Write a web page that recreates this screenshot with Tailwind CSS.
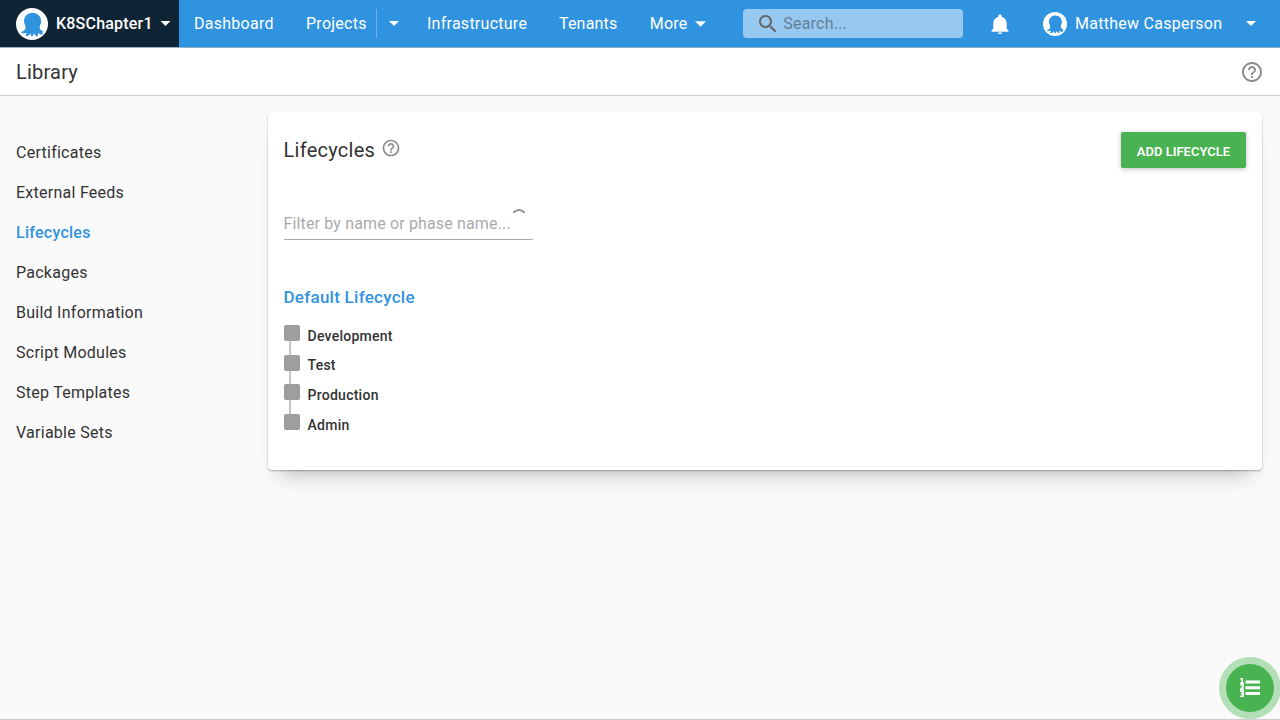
<!DOCTYPE html>
<html lang="en">
<head>
<meta charset="utf-8">
<title>Library - Lifecycles</title>
<script src="https://cdn.jsdelivr.net/npm/@tailwindcss/browser@4"></script>
</head>
<body class="h-[720px] overflow-hidden bg-[#fafafa] font-['Roboto',sans-serif] tracking-[0.26px] text-[#333333]">
<svg class="hidden">
  <symbol id="octo" viewBox="0 0 32 32"><circle cx="16" cy="16" r="16" fill="#fff"/><path fill="#2f93e0" d="M16.500 4.800C11.600 4.800 8 8.400 8 13.200C8 15.800 9.600 17.500 9.600 19.500C9.600 21.800 7.800 23.200 5 24.200C6.200 25.700 8.500 25.600 10.600 24.700C10.500 26 9.800 26.800 9.600 27.900C11.800 28.500 13.400 27.200 14.400 25.200C14.900 26.300 14.800 27.700 15.800 28.400C17.200 28.200 17.600 26.600 18 25.200C18.900 26.600 19.600 28.200 21.400 28.400C22.300 27.200 21.900 26 22 24.700C23.300 25.700 24.700 27 26.800 26.400C26.900 25.300 26.300 24.700 26 23.900C26.800 24.200 27.400 24.300 28 23.900C25.500 22.800 23.600 21.500 23.600 19.300C23.600 17.300 25.200 16 25.200 13.500C25.200 8.500 21.500 4.800 16.500 4.800z"/></symbol>
  <symbol id="help" viewBox="0 0 24 24"><path fill="#8c8c8c" d="M11 18h2v-2h-2v2zm1-16C6.480 2 2 6.480 2 12s4.480 10 10 10 10-4.480 10-10S17.520 2 12 2zm0 18c-4.410 0-8-3.590-8-8s3.590-8 8-8 8 3.590 8 8-3.590 8-8 8zm0-14c-2.210 0-4 1.790-4 4h2c0-1.100.9-2 2-2s2 .9 2 2c0 2-3 1.750-3 5h2c0-2.250 3-2.500 3-5 0-2.210-1.790-4-4-4z"/></symbol>
  <symbol id="caret" viewBox="0 0 10 5"><path fill="#fff" d="M0 0h10L5 5z"/></symbol>
</svg>

<header class="flex h-12 items-center border-b border-[#8fb2cf] bg-[#2f93e0] text-base text-white">
  <div class="flex h-full w-[179px] items-center bg-[#0f2535] pl-4 font-medium">
    <svg class="size-8"><use href="#octo"/></svg>
    <span class="ml-2 w-[104px] tracking-[0.2px]">K8SChapter1</span>
    <svg class="h-[5px] w-[11px]"><use href="#caret"/></svg>
  </div>
  <nav class="flex h-full w-[564px] items-center pl-[15px]">
    <span class="w-28">Dashboard</span>
    <span class="w-[70px]">Projects</span>
    <span class="h-[29px] w-px bg-white/30"></span>
    <svg class="mr-7 ml-3 h-[5px] w-2.5"><use href="#caret"/></svg>
    <span class="w-[132px]">Infrastructure</span>
    <span class="w-[91px] tracking-[0.18px]">Tenants</span>
    <span class="-ml-[0.300px] w-[45.300px]">More</span>
    <svg class="mt-px h-1.5 w-[11px]"><use href="#caret"/></svg>
  </nav>
  <div class="flex h-[29px] w-[220px] items-center rounded bg-white/50 pl-[13px] text-[#607f99]">
    <svg class="mr-[3.300px] size-6" viewBox="0 0 24 24"><path fill="#666" d="M15.500 14h-.79l-.28-.27C15.410 12.590 16 11.110 16 9.500 16 5.910 13.090 3 9.500 3S3 5.910 3 9.500 5.910 16 9.500 16c1.610 0 3.090-.59 4.230-1.570l.27.28v.79l5 4.990L20.490 19l-4.990-5zm-6 0C7.010 14 5 11.990 5 9.500S7.010 5 9.500 5 14 7.010 14 9.500 11.990 14 9.500 14z"/></svg>
    <span class="tracking-[0.2px]">Search...</span>
  </div>
  <svg class="ml-[24.500px] size-6" viewBox="0 0 24 24"><path fill="#fff" d="M12 22.200c1.200 0 2.100-.7 2.200-1.700H9.800c.1 1 1 1.700 2.200 1.700zM18.700 16.800v-5.300c0-3.400-1.900-5.900-5-6.700V4c0-.9-.7-1.600-1.700-1.600s-1.700.7-1.700 1.600v.8c-3.100.8-5 3.300-5 6.700v5.300L3.500 18.500v1.200h17v-1.200z"/></svg>
  <svg class="ml-[31.500px] size-6"><use href="#octo"/></svg>
  <span class="ml-2 w-[171px]">Matthew Casperson</span>
  <svg class="h-[5px] w-2.5"><use href="#caret"/></svg>
</header>

<div class="flex h-12 items-center justify-between border-b border-[#cccccc] bg-white pr-4 pl-4">
  <h1 class="text-xl tracking-[0.2px]">Library</h1>
  <svg class="size-6"><use href="#help"/></svg>
</div>

<div class="flex h-[624px] border-b border-[#cccccc]">
  <nav class="flex w-[268px] flex-col pt-[37px] pl-4 text-base leading-10">
    <a>Certificates</a>
    <a>External Feeds</a>
    <a class="font-medium text-[#2f93e0]">Lifecycles</a>
    <a>Packages</a>
    <a>Build Information</a>
    <a>Script Modules</a>
    <a>Step Templates</a>
    <a>Variable Sets</a>
  </nav>
  <main class="mt-4 h-[358px] w-[994px] rounded bg-white pt-5 pr-4 pl-[15.500px] shadow-[0_1px_2px_rgba(0,0,0,0.3),0_16px_20px_-12px_rgba(0,0,0,0.25)]">
    <div class="flex h-9 items-center">
      <h2 class="w-[97.500px] text-xl">Lifecycles</h2>
      <svg class="mb-1 size-5"><use href="#help"/></svg>
      <button class="ml-auto h-9 w-[125px] rounded-xs bg-[#48b350] pt-[3px] text-[13px] font-semibold tracking-normal text-white shadow-[0_1px_5px_rgba(0,0,0,0.25)]">ADD LIFECYCLE</button>
    </div>
    <div class="mt-9 ml-[0.500px] flex h-9 w-[249px] border-b border-[#aaaaaa] text-base leading-10 text-[#aaaaaa]">
      <span class="-ml-[0.500px] w-[229px] tracking-[0.15px] whitespace-nowrap">Filter by name or phase name...</span>
      <svg class="mt-[3px] h-2 w-3" viewBox="0 0 12 8"><path d="M.3 5.700Q6 .3 11.700 5.700" fill="none" stroke="#8c8c8c" stroke-width="1.900"/></svg>
    </div>
    <h3 class="mt-[45px] h-6 text-[17px] leading-6 font-medium text-[#2f93e0]">Default Lifecycle</h3>
    <ul class="mt-4 ml-[0.500px] text-sm font-medium">
      <li class="flex h-[30px] gap-[7.500px]"><div class="flex w-4 flex-col"><i class="size-4 rounded-xs bg-[#9e9e9e]"></i><i class="ml-[5px] w-0.5 grow bg-[#c4c4c4]"></i></div><span class="pt-px">Development</span></li>
      <li class="flex h-[29px] gap-[7.500px]"><div class="flex w-4 flex-col"><i class="size-4 rounded-xs bg-[#9e9e9e]"></i><i class="ml-[5px] w-0.5 grow bg-[#c4c4c4]"></i></div><span>Test</span></li>
      <li class="flex h-[30px] gap-[7.500px]"><div class="flex w-4 flex-col"><i class="size-4 rounded-xs bg-[#9e9e9e]"></i><i class="ml-[5px] w-0.5 grow bg-[#c4c4c4]"></i></div><span class="pt-px">Production</span></li>
      <li class="flex gap-[7.500px]"><i class="size-4 rounded-xs bg-[#9e9e9e]"></i><span class="pt-px">Admin</span></li>
    </ul>
  </main>
</div>

<button class="absolute top-[657px] left-[1219px] flex size-[62px] items-center justify-center rounded-full bg-[#b3dfb7]">
  <span class="flex size-12 items-center justify-center rounded-full bg-[#48b350]">
    <svg class="h-5 w-5" viewBox="0 0 20 20" fill="#fff"><path d="M5.500 2.500H20v3H5.500zM5.500 8.300H20v3H5.500zM5.500 14H20v3H5.500z"/><path fill="none" stroke="#fff" stroke-width="1.600" d="M.3 .8h1.900v4.400M.2 5.200H4M.2 7h3v1.600L1 10.800v.6h3M.2 13.400h3v4.800H.2M1 15.800h2.200"/></svg>
  </span>
</button>
</body>
</html>
